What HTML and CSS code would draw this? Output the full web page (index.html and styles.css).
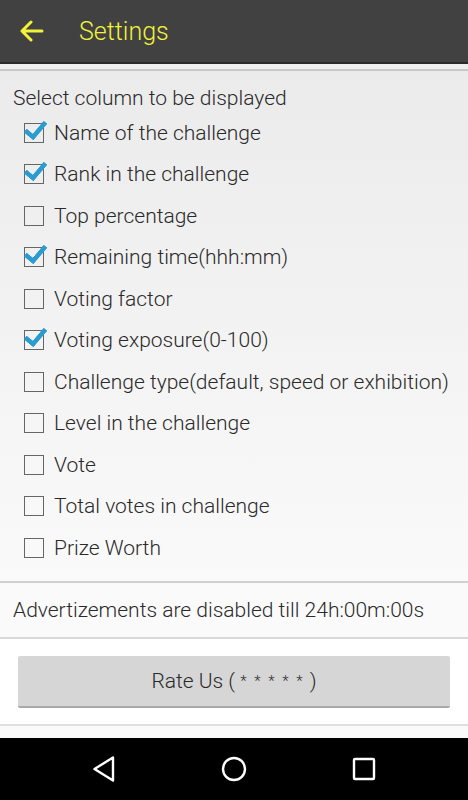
FILE: index.html
```html
<!DOCTYPE html>
<html lang="en">
<head>
    <meta charset="UTF-8">
    <meta name="viewport" content="width=device-width, initial-scale=1.0">
    <title>Settings</title>
    <link rel="stylesheet" href="styles.css">
</head>
<body>
    <div class="appbar">
        <svg class="back" width="24" height="22" viewBox="0 0 24 22">
            <path d="M22 11H3M11 2L2 11l9 9" fill="none" stroke="#f2f23a" stroke-width="3" stroke-linecap="round" stroke-linejoin="round"/>
        </svg>
        <span class="title">Settings</span>
    </div>
    <div class="strip"></div>

    <div class="content">
        <p class="label">Select column to be displayed</p>
        <ul class="options">
            <li class="checked"><span class="box"></span>Name of the challenge</li>
            <li class="checked"><span class="box"></span>Rank in the challenge</li>
            <li><span class="box"></span>Top percentage</li>
            <li class="checked"><span class="box"></span>Remaining time(hhh:mm)</li>
            <li><span class="box"></span>Voting factor</li>
            <li class="checked"><span class="box"></span>Voting exposure(0-100)</li>
            <li><span class="box"></span>Challenge type(default, speed or exhibition)</li>
            <li><span class="box"></span>Level in the challenge</li>
            <li><span class="box"></span>Vote</li>
            <li><span class="box"></span>Total votes in challenge</li>
            <li><span class="box"></span>Prize Worth</li>
        </ul>
    </div>

    <div class="ads">Advertizements are disabled till 24h:00m:00s</div>

    <div class="rate">
        <button class="rate-btn">Rate Us ( <span class="stars">* * * * *</span> )</button>
    </div>

    <div class="navbar">
        <svg width="26" height="28" viewBox="0 0 26 28">
            <path d="M22 2.5L3.5 14L22 25.5z" fill="none" stroke="#fff" stroke-width="2.4" stroke-linejoin="round"/>
        </svg>
        <svg width="26" height="28" viewBox="0 0 26 28">
            <circle cx="13" cy="14" r="11" fill="none" stroke="#fff" stroke-width="2.4"/>
        </svg>
        <svg width="26" height="28" viewBox="0 0 26 28">
            <rect x="3" y="4" width="20" height="20" rx="1" fill="none" stroke="#fff" stroke-width="2.4"/>
        </svg>
    </div>
</body>
</html>
```

FILE: styles.css
```css
body {
    margin: 0;
    width: 468px;
    height: 800px;
    font-family: Roboto, 'Noto Sans', sans-serif;
    font-weight: 300;
    color: #2a2a2a;
    background-color: #fafafa;
    display: flex;
    flex-direction: column;
    overflow: hidden;
}

.appbar {
    height: 64px;
    box-sizing: border-box;
    background-color: #414141;
    border-bottom: 2px solid #2a2a2a;
    display: flex;
    align-items: center;
}

.back {
    margin-left: 20px;
}

.title {
    margin-left: 35px;
    font-size: 25px;
    color: #f2f23a;
}

.strip {
    height: 5px;
    background-color: #eeeeee;
    border-bottom: 2px solid #c8c8c8;
}

.content {
    background: linear-gradient(#ebebeb, #fafafa);
    padding: 13px 0 0 13px;
    height: 512px;
    box-sizing: border-box;
    border-bottom: 2px solid #cfcfcf;
}

.label {
    margin: 0;
    font-size: 21px;
    line-height: 28px;
}

.options {
    list-style: none;
    margin: 0;
    padding: 0 0 0 11px;
}

.options li {
    height: 41.5px;
    display: flex;
    align-items: center;
    font-size: 21px;
    white-space: nowrap;
}

.box {
    width: 18px;
    height: 18px;
    border: 1.5px solid #666;
    margin-right: 10px;
    position: relative;
    flex-shrink: 0;
}

.checked .box::after {
    content: "";
    position: absolute;
    left: 4px;
    top: -7px;
    width: 8px;
    height: 17px;
    border-right: 5px solid #2b9ccf;
    border-bottom: 5px solid #2b9ccf;
    transform: rotate(40deg);
    border-radius: 1px;
}

.ads {
    height: 54px;
    display: flex;
    align-items: center;
    padding-left: 13px;
    font-size: 21px;
    background-color: #fafafa;
    border-bottom: 2px solid #d8d8d8;
}

.rate {
    padding: 17px 18px;
    background-color: #fff;
    border-bottom: 2px solid #dedede;
    height: 87px;
    box-sizing: border-box;
}

.rate-btn {
    width: 100%;
    height: 52px;
    border: none;
    border-bottom: 2px solid #a8a8a8;
    border-radius: 2px;
    background-color: #d6d6d6;
    font-family: Roboto, 'Noto Sans', sans-serif;
    font-weight: 300;
    font-size: 21px;
    color: #2a2a2a;
}

.stars {
    font-size: 15px;
    letter-spacing: 2px;
    vertical-align: 2px;
}

.navbar {
    margin-top: 12px;
    flex: 1;
    background-color: #000;
    display: flex;
    align-items: center;
    justify-content: center;
    gap: 104px;
}
```
